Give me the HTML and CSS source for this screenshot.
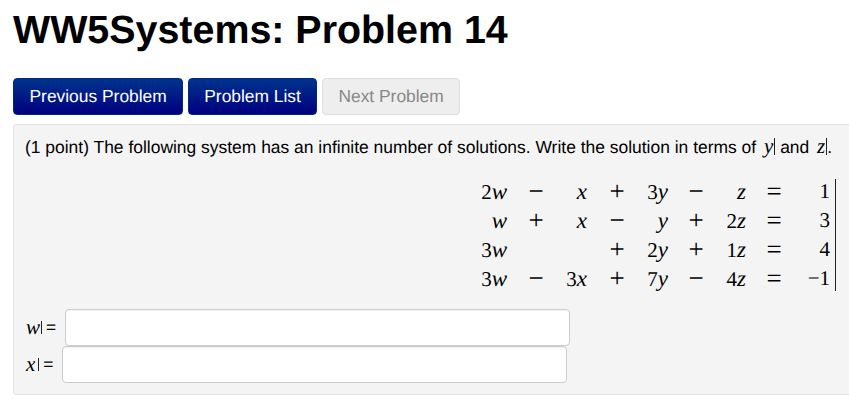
FILE: index.html
```html
<!DOCTYPE html>
<html lang="en">
<head>
<meta charset="utf-8">
<title>WW5Systems: Problem 14</title>
<link rel="stylesheet" href="styles.css">
</head>
<body>
<h1 class="title">WW5Systems: Problem 14</h1>
<nav class="nav">
  <a class="btn btn-primary">Previous Problem</a>
  <a class="btn btn-primary">Problem List</a>
  <a class="btn btn-disabled">Next Problem</a>
</nav>
<main class="panel">
  <p class="statement">(1 point) The following system has an infinite number of solutions. Write the solution in terms of <var class="mv cursor">y</var> and <var class="mv cursor">z</var>.</p>
  <div class="system">
    <span class="bar"></span>
    <span class="t">2<var>w</var></span><span class="o">&minus;</span><span class="t"><var>x</var></span><span class="o">+</span><span class="t">3<var>y</var></span><span class="o">&minus;</span><span class="t"><var>z</var></span><span class="o">=</span><span class="t">1</span>
    <span class="t"><var>w</var></span><span class="o">+</span><span class="t"><var>x</var></span><span class="o">&minus;</span><span class="t"><var>y</var></span><span class="o">+</span><span class="t">2<var>z</var></span><span class="o">=</span><span class="t">3</span>
    <span class="t">3<var>w</var></span><span class="o"></span><span class="t"></span><span class="o">+</span><span class="t">2<var>y</var></span><span class="o">+</span><span class="t">1<var>z</var></span><span class="o">=</span><span class="t">4</span>
    <span class="t">3<var>w</var></span><span class="o">&minus;</span><span class="t">3<var>x</var></span><span class="o">+</span><span class="t">7<var>y</var></span><span class="o">&minus;</span><span class="t">4<var>z</var></span><span class="o">=</span><span class="t">&minus;1</span>
  </div>
  <div class="answers">
    <label class="answer"><var class="mv cursor">w</var><span class="eq">=</span><input class="field" type="text"></label>
    <label class="answer"><var class="mv cursor wide">x</var><span class="eq">=</span><input class="field" type="text"></label>
  </div>
</main>
</body>
</html>
```
FILE: styles.css
```css
* { box-sizing: border-box; }
html, body { margin: 0; padding: 0; background: #fff; overflow: hidden; }
body {
  width: 849px;
  height: 406px;
  padding: 0 0 0 13px;
  font-family: "Liberation Sans", Arial, sans-serif;
  font-size: 17.4px;
  color: #000;
  text-rendering: geometricPrecision;
}
.title {
  margin: 0;
  padding-top: 10px;
  height: 78px;
  font-size: 39.4px;
  line-height: 40px;
  font-weight: bold;
}
.nav { display: flex; gap: 4.5px; height: 37px; margin-bottom: 9px; }
.btn {
  display: flex;
  align-items: center;
  justify-content: center;
  height: 37px;
  padding: 0 15.5px 1px;
  border-radius: 4px;
}
.btn-primary {
  color: #fff;
  background: linear-gradient(to bottom, #00338d, #00007f);
  border: 1px solid #002a7a;
}
.btn-disabled {
  color: #888;
  background: #eee;
  border: 1px solid #ddd;
}
.panel {
  height: 271px;
  padding: 12px 0 0 11px;
  background: #f4f4f4;
  border: 1px solid #e3e3e3;
  border-right: 0;
  border-radius: 4px 0 0 4px;
}
.statement { margin: 0; line-height: 20px; font-size: 17.45px; }
var { font-family: "Liberation Serif", serif; font-style: italic; }
.mv { display: inline-block; font-size: 21px; line-height: 17px; }
.cursor { border-right: 1px solid #222; padding: 0 1px 0 3px; }
.system {
  display: grid;
  grid-template-columns: 37px 58px 22px 60px 21px 56px 22px 56px 28px 6px;
  grid-auto-rows: 29px;
  align-items: center;
  width: 366px;
  margin: 20px 0 0 445px;
  font-family: "Liberation Serif", serif;
  font-size: 21px;
}
.system var { font-size: 23px; }
.bar {
  grid-column: 10;
  grid-row: 1 / 5;
  justify-self: end;
  width: 1px;
  height: 112px;
  background: #222;
}
.t { text-align: right; }
.o { text-align: center; font-size: 27px; line-height: 29px; }
.answers { display: flex; flex-direction: column; margin-top: 16px; padding-left: 1px; }
.answer { display: flex; align-items: center; height: 37px; }
.answer .cursor { padding: 0 1px 0 0; line-height: 13px; }
.answer .wide { padding-right: 3px; }
.eq { margin: 0 9px 0 4px; }
.field {
  height: 37px;
  width: 505px;
  background: #fff;
  border: 1px solid #ccc;
  border-radius: 4px;
  box-shadow: inset 0 1px 1px rgba(0,0,0,.05);
}
```
